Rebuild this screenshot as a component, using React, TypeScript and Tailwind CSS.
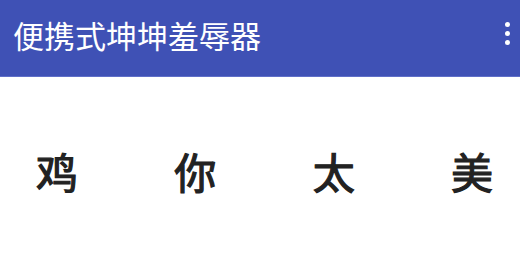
import React from "react";

export default function App() {
  const chars = ["鸡", "你", "太", "美"];
  return (
    <div
      className="w-[520px] h-[274px] bg-white overflow-hidden"
      style={{ fontFamily: '"Noto Sans CJK SC", "Noto Sans", sans-serif' }}
    >
      <div className="h-[77px] bg-[#3F51B5] flex items-center justify-between pl-[13px] pr-[10px] border-b border-[#5f6fc8]">
        <div className="text-white text-[31px] font-normal leading-none -mt-[7px]">
          便携式坤坤羞辱器
        </div>
        <div className="flex flex-col gap-[4px] items-center -mt-[9px]">
          <span className="w-[5px] h-[5px] rounded-full bg-white" />
          <span className="w-[5px] h-[5px] rounded-full bg-white" />
          <span className="w-[5px] h-[5px] rounded-full bg-white" />
        </div>
      </div>
      <div className="flex justify-between pl-[36px] pr-[27px] pt-[73px]">
        {chars.map((c) => (
          <span
            key={c}
            className="text-[42px] font-normal leading-none text-[#222222] [-webkit-text-stroke:1.2px_#222222]"
          >
            {c}
          </span>
        ))}
      </div>
    </div>
  );
}
